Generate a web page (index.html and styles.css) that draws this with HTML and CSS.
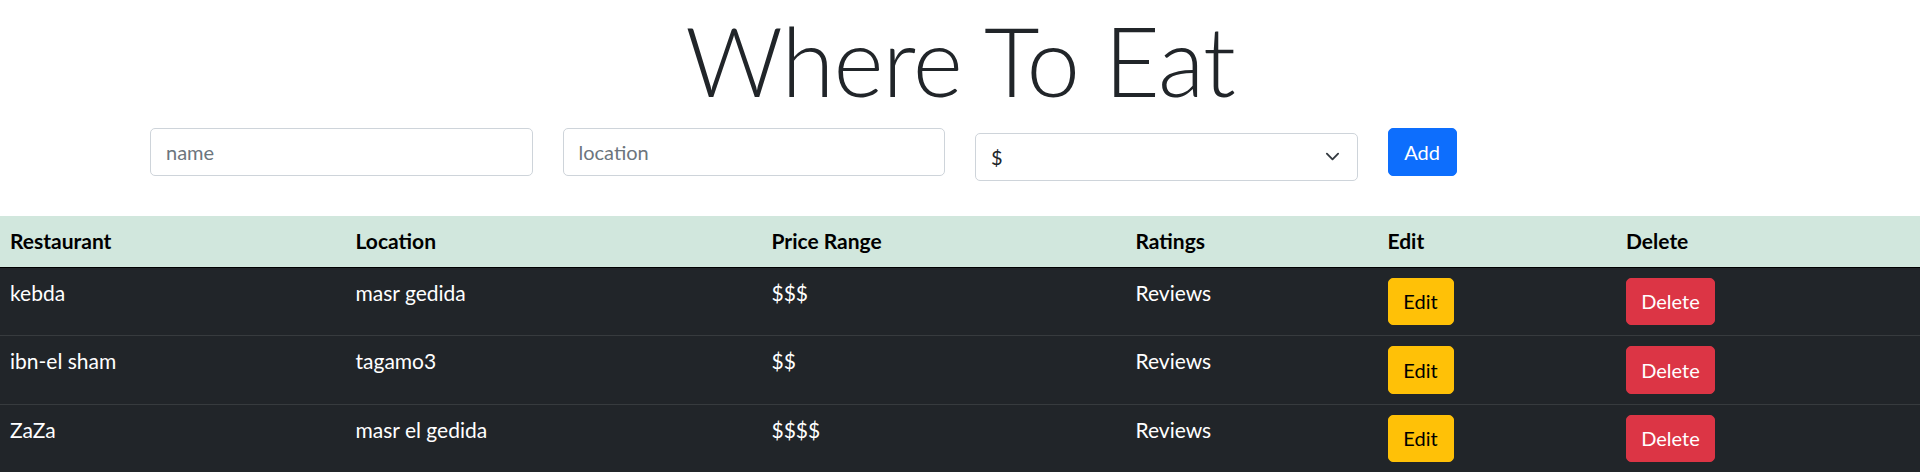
FILE: index.html
```html
<!DOCTYPE html>
<html lang="en">
<head>
<meta charset="utf-8">
<title>Where To Eat</title>
<link rel="stylesheet" href="styles.css">
</head>
<body>
<h1 class="title">Where To Eat</h1>
<div class="form-row">
  <div class="col"><input class="field" type="text" placeholder="name"></div>
  <div class="col"><input class="field" type="text" placeholder="location"></div>
  <div class="col">
    <div class="select-wrap">
      <select class="field select">
        <option>$</option>
        <option>$$</option>
        <option>$$$</option>
        <option>$$$$</option>
      </select>
      <svg class="chevron" viewBox="0 0 16 16" width="15" height="15"><path d="M2 5l6 6 6-6" fill="none" stroke="#343a40" stroke-width="2" stroke-linecap="round" stroke-linejoin="round"/></svg>
    </div>
  </div>
  <div class="col"><button class="btn btn-add">Add</button></div>
</div>
<table class="table">
  <thead>
    <tr>
      <th class="c1">Restaurant</th>
      <th class="c2">Location</th>
      <th class="c3">Price Range</th>
      <th class="c4">Ratings</th>
      <th class="c5">Edit</th>
      <th class="c6">Delete</th>
    </tr>
  </thead>
  <tbody>
    <tr>
      <td>kebda</td><td>masr gedida</td><td>$$$</td><td>Reviews</td>
      <td><button class="btn btn-edit">Edit</button></td>
      <td><button class="btn btn-del">Delete</button></td>
    </tr>
    <tr>
      <td>ibn-el sham</td><td>tagamo3</td><td>$$</td><td>Reviews</td>
      <td><button class="btn btn-edit">Edit</button></td>
      <td><button class="btn btn-del">Delete</button></td>
    </tr>
    <tr>
      <td>ZaZa</td><td>masr el gedida</td><td>$$$$</td><td>Reviews</td>
      <td><button class="btn btn-edit">Edit</button></td>
      <td><button class="btn btn-del">Delete</button></td>
    </tr>
  </tbody>
</table>
</body>
</html>
```
FILE: styles.css
```css
* { box-sizing: border-box; }
html, body { margin: 0; padding: 0; }
body {
  font-family: Lato, "Open Sans", sans-serif;
  font-size: 20px;
  line-height: 30px;
  color: #212529;
  background: #fff;
}
.title {
  margin: 0;
  font-size: 96px;
  font-weight: 300;
  letter-spacing: -1px;
  line-height: 120px;
  height: 120px;
  text-align: center;
  color: #212529;
}
.form-row {
  width: 1650px;
  margin: 8px auto 0;
  display: flex;
  height: 88px;
}
.col {
  flex: 0 0 25%;
  padding: 0 15px;
}
.field {
  display: block;
  width: 100%;
  height: 47.5px;
  padding: 7.5px 15px;
  font-family: inherit;
  font-size: 20px;
  line-height: 30px;
  color: #212529;
  background: #fff;
  border: 1.25px solid #ced4da;
  border-radius: 5px;
  outline: none;
}
.field::placeholder { color: #6c757d; }
.select-wrap {
  position: relative;
  margin-top: 5px;
}
.select {
  appearance: none;
  -webkit-appearance: none;
  padding-right: 45px;
}
.chevron {
  position: absolute;
  right: 17.5px;
  top: 16.25px;
  pointer-events: none;
}
.btn {
  display: block;
  font-family: inherit;
  font-size: 20px;
  line-height: 30px;
  padding: 7.5px 0;
  height: 47.5px;
  border: 1.25px solid transparent;
  border-radius: 5px;
  text-align: center;
  cursor: pointer;
}
.btn-add { width: 69px; background: #0d6efd; border-color: #0d6efd; color: #fff; }
.btn-edit { width: 66px; background: #ffc107; border-color: #ffc107; color: #000; }
.btn-del { width: 89px; background: #dc3545; border-color: #dc3545; color: #fff; }
.table {
  width: 100%;
  border-collapse: collapse;
  table-layout: fixed;
}
.table th, .table td {
  padding: 10px 10px;
  font-size: 21px;
  line-height: 30px;
  text-align: left;
  vertical-align: top;
}
.table thead th {
  background: #d1e7dd;
  color: #000;
  font-weight: 700;
  height: 51px;
  border-bottom: 1px solid #000;
}
.table tbody td {
  background: #212529;
  color: #fff;
  border-bottom: 1.5px solid #373b3e;
}
.c1 { width: 345.5px; }
.c2 { width: 416px; }
.c3 { width: 364px; }
.c4 { width: 252px; }
.c5 { width: 238.5px; }
.c6 { width: auto; }
```
